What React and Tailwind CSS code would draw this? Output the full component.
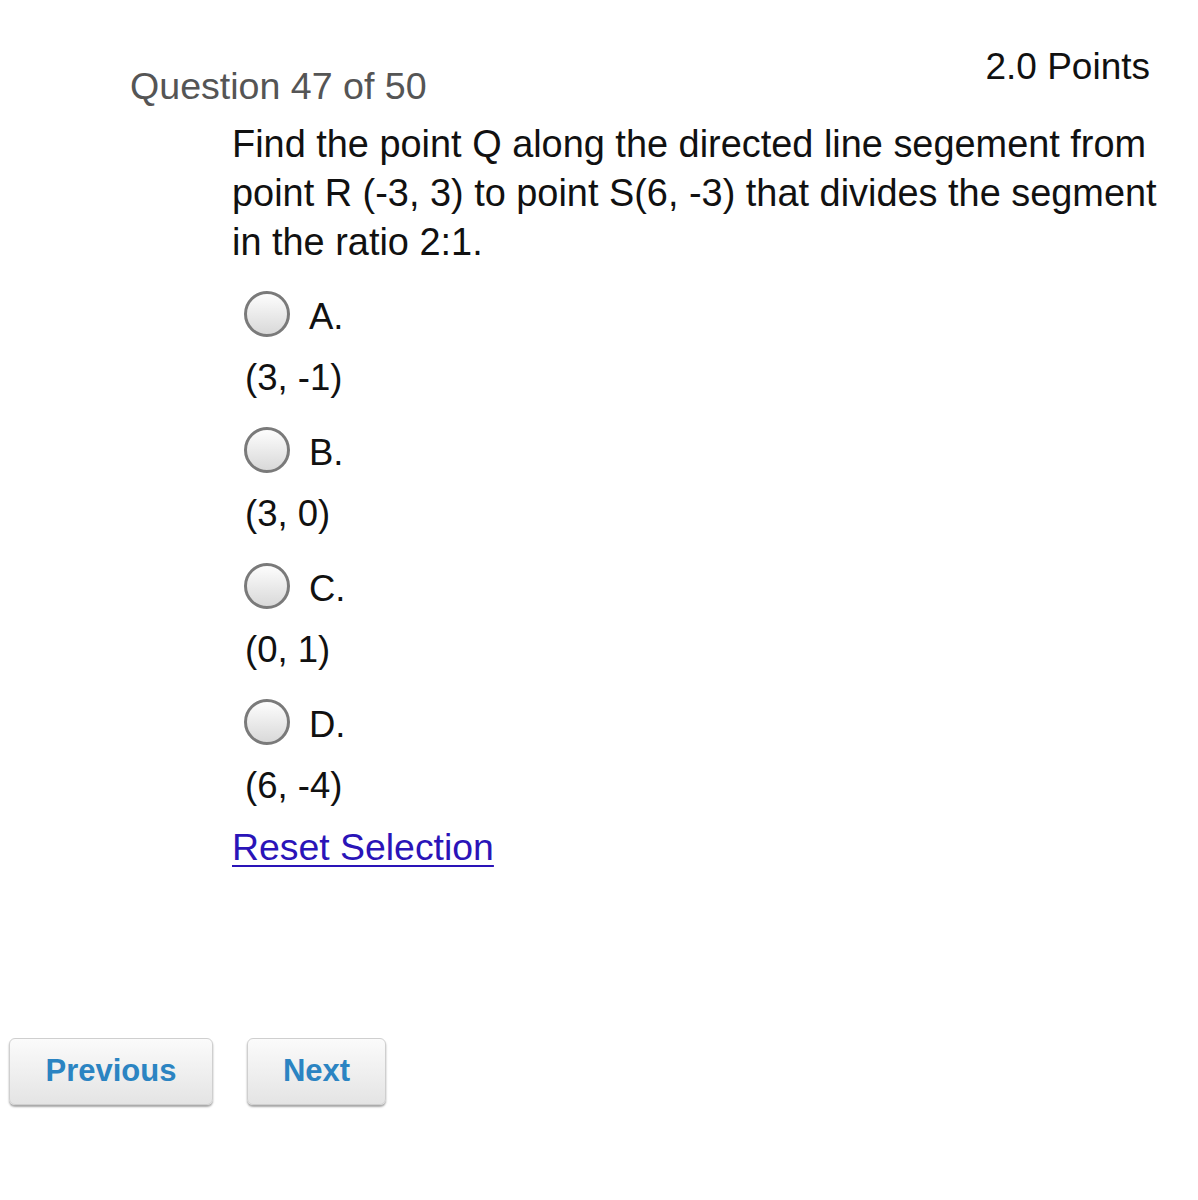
import React from "react";

const options = [
  { letter: "A.", answer: "(3, -1)" },
  { letter: "B.", answer: "(3, 0)" },
  { letter: "C.", answer: "(0, 1)" },
  { letter: "D.", answer: "(6, -4)" },
];

function Radio() {
  return (
    <span className="block w-[46px] h-[46px] rounded-full border-[3px] border-[#7a7a7a] bg-gradient-to-b from-[#fdfdfd] to-[#d9d9d9] shrink-0" />
  );
}

export default function App() {
  return (
    <div
      className="min-h-[1200px] w-[1198px] bg-white text-[#111] relative"
      style={{ fontFamily: '"Liberation Sans", Arial, Helvetica, sans-serif' }}
    >
      <div className="pt-[42px]">
        {/* Header */}
        <div className="flex justify-between items-start pl-[130px] pr-[48px] leading-[49px]">
          <div className="mt-[20px] text-[37.6px] text-[#555]">Question 47 of 50</div>
          <div className="text-[37px] text-[#111]">2.0 Points</div>
        </div>

        {/* Question */}
        <div className="pl-[232px] mt-[9px]">
          <p className="w-[935px] text-[37.9px] leading-[49px]">
            Find the point Q along the directed line segement from point R (-3, 3) to point S(6, -3) that divides the segment in the ratio 2:1.
          </p>

          <div className="mt-[22px] pl-[12px] flex flex-col gap-[23px]">
            {options.map((o) => (
              <div key={o.letter} className="flex flex-col gap-[15px] text-[36.5px] leading-[49px]">
                <label className="flex items-center gap-[19px] h-[49px]">
                  <Radio />
                  <span className="relative top-[3px]">{o.letter}</span>
                </label>
                <div className="pl-[1px]">{o.answer}</div>
              </div>
            ))}
          </div>

          <a
            href="#"
            className="block mt-[13px] text-[37.4px] leading-[49px] text-[#2a14b8] underline decoration-2 underline-offset-[5px] w-fit"
          >
            Reset Selection
          </a>
        </div>

        {/* Navigation */}
        <div className="flex gap-[34px] pl-[9px] mt-[166px]">
          <button className="w-[204px] h-[67px] rounded-[6px] border border-[#cfcfcf] bg-gradient-to-b from-[#fbfbfb] to-[#e4e4e4] shadow-[0_2px_2px_rgba(0,0,0,0.35)] text-[31px] font-bold text-[#2b84c2]">
            Previous
          </button>
          <button className="w-[139px] h-[67px] rounded-[6px] border border-[#cfcfcf] bg-gradient-to-b from-[#fbfbfb] to-[#e4e4e4] shadow-[0_2px_2px_rgba(0,0,0,0.35)] text-[31px] font-bold text-[#2b84c2]">
            Next
          </button>
        </div>
      </div>
    </div>
  );
}
